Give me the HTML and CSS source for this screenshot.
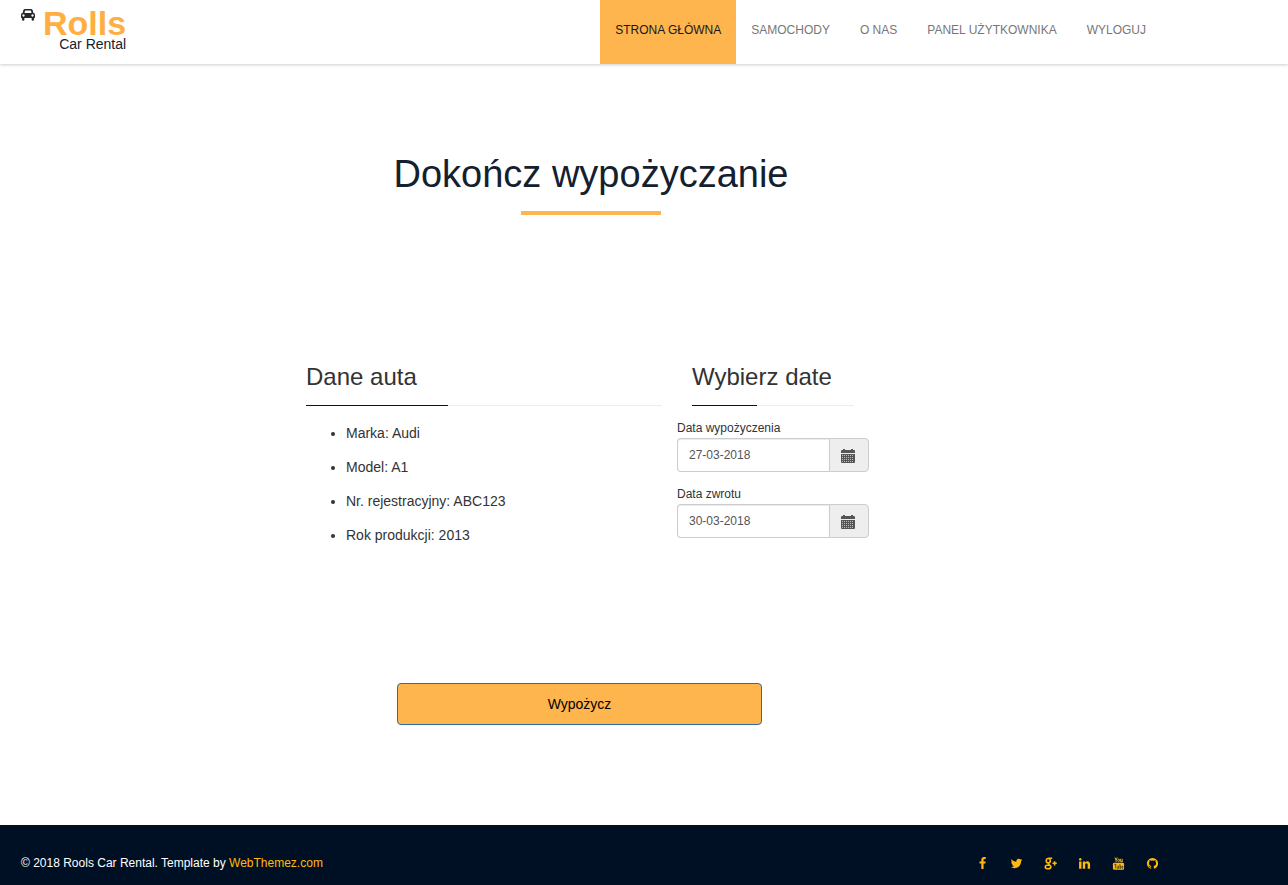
FILE: index.html
```html
<!DOCTYPE html>
<html lang="pl">
<head>
<meta charset="utf-8">
<meta name="viewport" content="width=device-width, initial-scale=1">
<title>Rolls Car Rental</title>
<link rel="stylesheet" href="styles.css">
</head>
<body>
<svg class="sprite" width="0" height="0" aria-hidden="true">
  <symbol id="calendar" viewBox="0 0 14 14">
    <path d="M0 4V2q0-1 1-1h1V0h2v1h6V0h2v1h1q1 0 1 1v2z"/>
    <path d="M0 5h14v8q0 1-1 1H1q-1 0-1-1z"/>
    <path class="calendar-grid" d="M1 6.500h12M1 8.500h12M1 10.500h12M1 12.500h12"/>
  </symbol>
</svg>

<header class="header">
  <div class="container header-inner">
    <a class="brand" href="#">
      <svg class="brand-icon" viewBox="0 0 14 12" aria-hidden="true">
        <path fill-rule="evenodd" d="M4 0h6q1.300 0 1.700 1.200L12.400 4q1.600.2 1.600 1.800v2.700q0 .5-.5.5H13v1.500q0 1.200-1.200 1.200T10.600 10.500V9H3.400v1.500q0 1.200-1.200 1.200T1 10.500V9H.5Q0 9 0 8.500V5.800Q0 4.200 1.600 4l.7-2.800Q2.700 0 4 0zM4.100 1.500L3.500 4h7l-.6-2.500zM2.500 5.300a1.200 1.200 0 1 0 .01 0zM11.500 5.300a1.200 1.200 0 1 0 .01 0z"/>
      </svg>
      <span class="brand-text">
        <span class="brand-name">Rolls</span>
        <span class="brand-sub">Car Rental</span>
      </span>
    </a>
    <nav class="nav">
      <a class="nav-link active" href="#">STRONA GŁÓWNA</a>
      <a class="nav-link" href="#">SAMOCHODY</a>
      <a class="nav-link" href="#">O NAS</a>
      <a class="nav-link" href="#">PANEL UŻYTKOWNIKA</a>
      <a class="nav-link" href="#">WYLOGUJ</a>
    </nav>
  </div>
</header>

<main class="main">
  <div class="container">
    <h1 class="title">Dokończ wypożyczanie</h1>
    <form class="rental" action="#">
      <div class="columns">
        <section class="car">
          <h2 class="heading">Dane auta</h2>
          <ul class="car-list">
            <li>Marka: Audi</li>
            <li>Model: A1</li>
            <li>Nr. rejestracyjny: ABC123</li>
            <li>Rok produkcji: 2013</li>
          </ul>
        </section>
        <section class="dates">
          <h2 class="heading dates-heading">Wybierz date</h2>
          <div class="field">
            <label for="rent-date">Data wypożyczenia</label>
            <div class="input-group">
              <input id="rent-date" type="text" value="27-03-2018">
              <button class="addon" type="button" aria-label="Wybierz datę wypożyczenia"><svg class="calendar" aria-hidden="true"><use href="#calendar"/></svg></button>
            </div>
          </div>
          <div class="field">
            <label for="return-date">Data zwrotu</label>
            <div class="input-group">
              <input id="return-date" type="text" value="30-03-2018">
              <button class="addon" type="button" aria-label="Wybierz datę zwrotu"><svg class="calendar" aria-hidden="true"><use href="#calendar"/></svg></button>
            </div>
          </div>
        </section>
      </div>
      <button class="submit" type="submit">Wypożycz</button>
    </form>
  </div>
</main>

<footer class="footer">
  <div class="container footer-inner">
    <p class="copyright">© 2018 Rools Car Rental. Template by <a href="#">WebThemez.com</a></p>
    <nav class="social">
      <a href="#" aria-label="Facebook"><svg viewBox="0 0 1792 1792"><path d="M1343 12v264h-157q-86 0-116 36t-30 108v189h293l-39 296h-254v759h-306v-759h-255v-296h255v-218q0-186 104-288.500t277-102.500q147 0 228 12z"/></svg></a>
      <a href="#" aria-label="Twitter"><svg viewBox="0 0 1792 1792"><path d="M1684 408q-67 98-162 167 1 14 1 42 0 130-38 259.500t-115.500 248.500-184.500 210.500-258 146-323 54.500q-271 0-496-145 35 4 78 4 225 0 401-138-105-2-188-64.500t-114-159.500q33 5 61 5 43 0 85-11-112-23-185.500-111.500t-73.500-205.500v-4q68 38 146 41-66-44-105-115t-39-154q0-88 44-163 121 149 294.500 238.500t371.500 99.500q-8-38-8-74 0-134 94.500-228.500t228.500-94.500q140 0 236 102 109-21 205-78-37 115-142 178 93-10 186-50z"/></svg></a>
      <a href="#" aria-label="Google Plus"><svg viewBox="0 0 14 14"><g fill="none" stroke="currentColor" stroke-width="1.700"><ellipse cx="4.600" cy="4" rx="2.200" ry="2.400"/><path d="M8.800 1.300H4.800M5.300 6.500q-1.100.9.300 1.800 2 1.100 1.900 2.400-.2 2-3 2-3.200 0-3.200-2 0-2.100 4.300-2.100"/><path d="M11.400 4.500v4.600M9.100 6.800h4.600"/></g></svg></a>
      <a href="#" aria-label="LinkedIn"><svg viewBox="0 0 1792 1792"><path d="M477 625v991h-330v-991h330zm21-306q1 73-50.500 122t-135.500 49h-2q-82 0-132-49t-50-122q0-74 51.500-122.500t134.500-48.500 133 48.500 51 122.500zm1166 729v568h-329v-530q0-105-40.500-164.500t-126.500-59.500q-63 0-105.500 34.500t-63.500 85.500q-11 30-11 81v553h-329q2-399 2-647t-1-296l-1-48h329v144h-2q20-32 41-56t56.500-52 87-43.500 114.500-15.500q171 0 275 113.500t104 332.500z"/></svg></a>
      <a href="#" aria-label="YouTube"><svg viewBox="0 0 14 14"><g fill="none" stroke="currentColor"><path d="M3.200.5l1.200 2.800L5.600.5M4.400 3v2.400M9.300 2v3h1.800M11 2v3.400"/><ellipse cx="7.200" cy="3.600" rx=".9" ry="1.400"/></g><rect x="1" y="6.200" width="12" height="7.600" rx="1.500"/><path class="cut" d="M2.500 8h2.400M3.700 8v4.500M5.500 9.300v2.900h1.400M7 9.300v3.200M8.500 7.500v4.700h1V9.600h-1M12 11.500q-.2.800-.8.700-.6 0-.6-1.200t.7-1.300q.6.100.6 1.200h-1"/></svg></a>
      <a href="#" aria-label="GitHub"><svg viewBox="0 0 1792 1792"><path d="M896 128q209 0 385.500 103t279.500 279.500 103 385.500q0 251-146.500 451.500t-378.500 277.500q-27 5-40-7t-13-30q0-3 .5-76.500t.5-134.500q0-97-52-142 57-6 102.500-18t94-39 81-66.500 53-105 20.500-150.500q0-119-79-206 37-91-8-204-28-9-81 11t-92 44l-38 24q-93-26-192-26t-192 26q-16-11-42.500-27t-83.500-38.500-85-13.500q-45 113-8 204-79 87-79 206 0 85 20.500 150t52.500 105 80.500 67 94 39 102.500 18q-39 36-49 103-21 10-45 15t-57 5-65.500-21.500-55.500-62.500q-19-32-48.500-52t-49.500-24l-20-3q-21 0-29 4.500t-5 11.500 9 14 13 12l7 5q22 10 43.500 38t31.500 51l10 23q13 38 44 61.500t67 30 69.500 7 55.500-3.500l23-4q0 38 .5 88.500t.5 54.500q0 18-13 30t-40 7q-232-77-378.500-277.500t-146.500-451.500q0-209 103-385.500t279.500-279.500 385.500-103z"/></svg></a>
    </nav>
  </div>
</footer>
</body>
</html>
```

FILE: styles.css
```css
* {
  box-sizing: border-box;
}

body {
  margin: 0;
  min-height: 100vh;
  display: flex;
  flex-direction: column;
  background: #fff;
  color: #333;
  font: 14px/20px "Liberation Sans", Arial, sans-serif;
}

a {
  color: inherit;
  text-decoration: none;
}

svg {
  fill: currentColor;
}

.sprite {
  position: absolute;
}

.container {
  width: 100%;
  max-width: 1170px;
  margin-left: 6px;
  padding: 0 15px;
}

.header {
  background: #fff;
  box-shadow: 0 1px 3px rgba(0, 0, 0, 0.2);
}

.header-inner {
  display: flex;
  flex-wrap: wrap;
  justify-content: space-between;
}

.brand {
  display: flex;
  gap: 8px;
  padding-top: 9px;
  color: #25292e;
}

.brand-icon {
  width: 14px;
  height: 12px;
}

.brand-text {
  display: flex;
  flex-direction: column;
  align-items: flex-end;
}

.brand-name {
  color: #ffaf42;
  font-size: 34px;
  font-weight: bold;
  line-height: 29px;
}

.brand-sub {
  color: #16202e;
  line-height: 12px;
}

.nav {
  display: flex;
  flex-wrap: wrap;
}

.nav-link {
  padding: 20px 15px 24px;
  color: #777;
  font-size: 12px;
}

.nav-link.active {
  background: #ffb54d;
  color: #16181b;
}

.main {
  flex: 1;
  padding: 89px 0 100px;
}

.title {
  margin: 0;
  color: #14202e;
  font-size: 38px;
  font-weight: normal;
  line-height: 42px;
  text-align: center;
}

.title::after {
  content: "";
  display: block;
  width: 140px;
  height: 4px;
  margin: 16px auto 0;
  background: #ffb54d;
}

.rental {
  padding-top: 149px;
}

.columns {
  display: flex;
  flex-wrap: wrap;
  gap: 15px;
  padding-left: 285px;
}

.car {
  width: 356px;
}

.dates {
  width: 192px;
}

.heading {
  margin: 0;
  border-bottom: 1px solid #eee;
  color: #333;
  font-size: 24px;
  font-weight: normal;
  line-height: 26px;
}

.heading::after {
  content: "";
  display: block;
  width: 40%;
  height: 1px;
  margin: 15px 0 -1px;
  background: #111;
}

.dates-heading {
  margin: 0 15px;
}

.car-list {
  display: grid;
  gap: 14px;
  margin: 17px 0 0;
  padding-left: 40px;
}

.dates-heading + .field {
  margin-top: 13px;
}

.field {
  margin-bottom: 13px;
  font-size: 12px;
}

.field label {
  display: block;
  line-height: 19px;
}

.input-group {
  display: flex;
  height: 34px;
}

.input-group input {
  flex: 1;
  min-width: 0;
  padding: 6px 11px;
  border: 1px solid #ccc;
  border-right: 0;
  border-radius: 4px 0 0 4px;
  box-shadow: inset 0 1px 1px rgba(0, 0, 0, 0.08);
  color: #555;
  font: inherit;
}

.addon {
  display: flex;
  align-items: center;
  justify-content: center;
  width: 40px;
  padding: 2px 2px 0 0;
  border: 1px solid #ccc;
  border-radius: 0 4px 4px 0;
  background: #eee;
  color: #555;
}

.calendar {
  width: 14px;
  height: 14px;
}

.calendar-grid {
  fill: none;
  stroke: #bbb;
  stroke-width: 1;
  stroke-dasharray: 1 1;
}

.submit {
  display: block;
  width: 365px;
  height: 42px;
  margin: 132px 0 0 376px;
  border: 1px solid #2e6da4;
  border-radius: 4px;
  background: #ffb54d;
  color: #000;
  font: inherit;
}

.footer {
  padding: 28px 0 12px;
  background: #001024;
  color: #fff;
  font-size: 12px;
}

.footer-inner {
  display: flex;
  flex-wrap: wrap;
  align-items: center;
  justify-content: space-between;
}

.copyright {
  margin: 0;
}

.copyright a,
.social {
  color: #ffb90f;
}

.social {
  display: flex;
  gap: 21px;
  padding: 1px 2px 0 0;
}

.social a {
  display: flex;
}

.social svg {
  width: 13px;
  height: 13px;
}

.social .cut {
  fill: none;
  stroke: #001024;
  stroke-width: 0.6;
}
```
